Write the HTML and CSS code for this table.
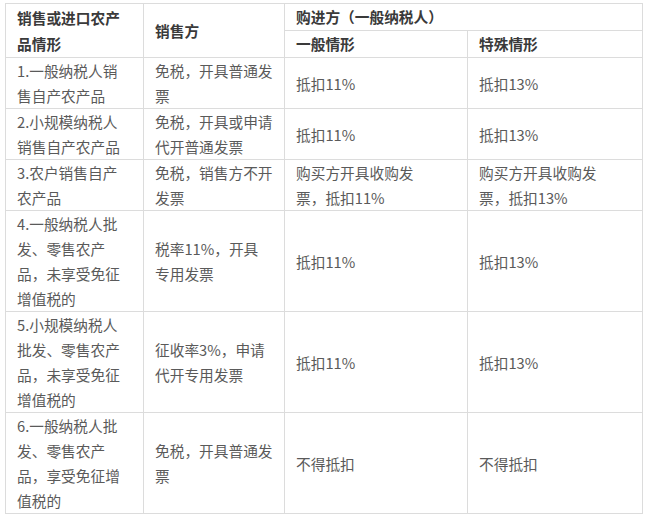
FILE: index.html
```html
<!DOCTYPE html>
<html lang="zh-CN">
<head>
<meta charset="utf-8">
<link rel="stylesheet" href="styles.css">
</head>
<body>
<div class="wrap">
<table class="tax">
<colgroup>
<col class="c1"><col class="c2"><col class="c3"><col class="c4">
</colgroup>
<thead>
<tr class="h">
<th rowspan="2">销售或进口农产<br>品情形</th>
<th rowspan="2">销售方</th>
<th colspan="2">购进方（一般纳税人）</th>
</tr>
<tr class="h">
<th>一般情形</th>
<th>特殊情形</th>
</tr>
</thead>
<tbody>
<tr>
<td>1.一般纳税人销<br>售自产农产品</td>
<td>免税，开具普通发<br>票</td>
<td>抵扣11%</td>
<td>抵扣13%</td>
</tr>
<tr>
<td>2.小规模纳税人<br>销售自产农产品</td>
<td>免税，开具或申请<br>代开普通发票</td>
<td>抵扣11%</td>
<td>抵扣13%</td>
</tr>
<tr>
<td>3.农户销售自产<br>农产品</td>
<td>免税，销售方不开<br>发票</td>
<td>购买方开具收购发<br>票，抵扣11%</td>
<td>购买方开具收购发<br>票，抵扣13%</td>
</tr>
<tr>
<td>4.一般纳税人批<br>发、零售农产<br>品，未享受免征<br>增值税的</td>
<td>税率11%，开具<br>专用发票</td>
<td>抵扣11%</td>
<td>抵扣13%</td>
</tr>
<tr>
<td>5.小规模纳税人<br>批发、零售农产<br>品，未享受免征<br>增值税的</td>
<td>征收率3%，申请<br>代开专用发票</td>
<td>抵扣11%</td>
<td>抵扣13%</td>
</tr>
<tr>
<td>6.一般纳税人批<br>发、零售农产<br>品，享受免征增<br>值税的</td>
<td>免税，开具普通发<br>票</td>
<td>不得抵扣</td>
<td>不得抵扣</td>
</tr>
</tbody>
</table>
</div>
</body>
</html>
```
FILE: styles.css
```css
html, body {
  margin: 0;
  padding: 0;
  background: #fff;
}
.wrap {
  padding: 3px 0 0 5px;
}
.tax {
  border-collapse: collapse;
  table-layout: fixed;
  width: 638px;
  font-family: "Noto Sans CJK SC", "Microsoft YaHei", sans-serif;
  font-size: 14.7px;
  color: #5a5a5a;
}
.c1 { width: 138px; }
.c2 { width: 141px; }
.c3 { width: 183px; }
.c4 { width: 175px; }
.tax th,
.tax td {
  border: 1px solid #dcdcdc;
  padding: 0 8px 0 11px;
  line-height: 25px;
  text-align: left;
  vertical-align: middle;
  white-space: nowrap;
  overflow: hidden;
}
.tax th {
  font-weight: bold;
  color: #3a3a3a;
  line-height: 26px;
}
```
